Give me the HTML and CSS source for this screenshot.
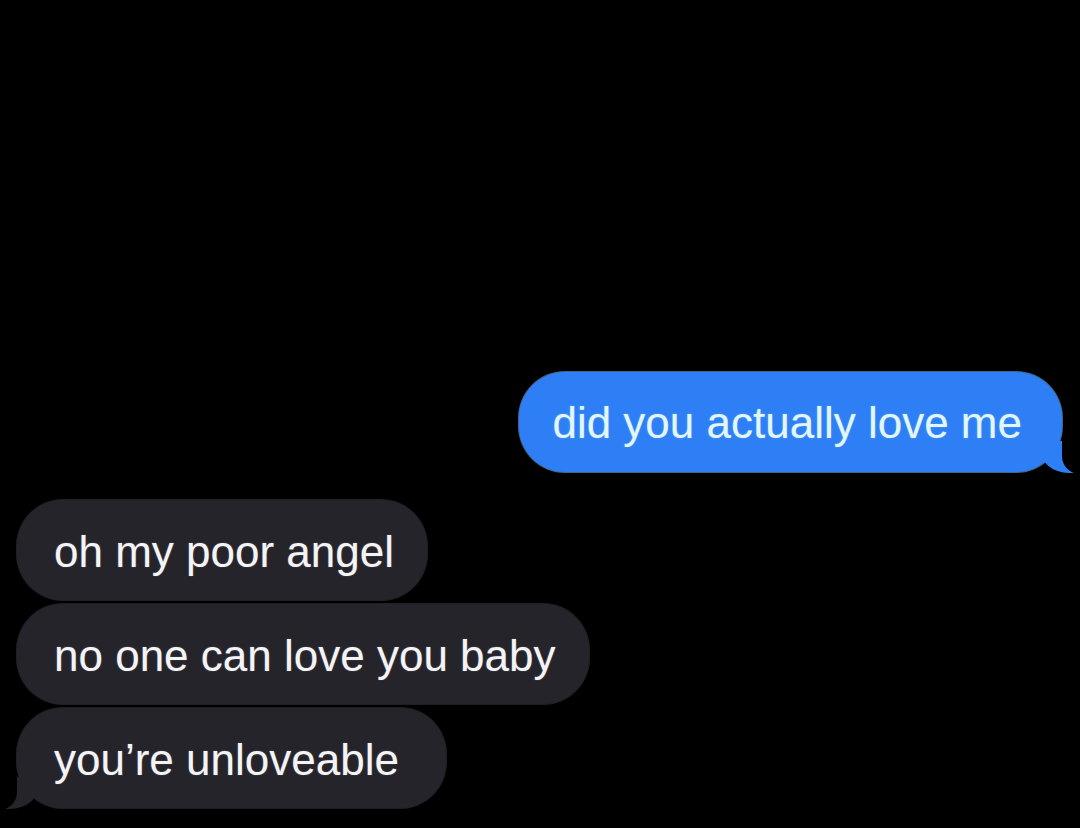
FILE: index.html
```html
<!DOCTYPE html>
<html lang="en">
<head>
<meta charset="utf-8">
<title>Messages</title>
<link rel="stylesheet" href="styles.css">
</head>
<body>
  <main class="thread">
    <div class="bubble sent tail-right">did you actually love me</div>
    <div class="group">
      <div class="bubble received">oh my poor angel</div>
      <div class="bubble received">no one can love you baby</div>
      <div class="bubble received tail-left wide-pad">you’re unloveable</div>
    </div>
  </main>
</body>
</html>
```

FILE: styles.css
```css
html, body {
  margin: 0;
  padding: 0;
  background: #000;
}

body {
  width: 1080px;
  height: 828px;
  overflow: hidden;
  font-family: "Liberation Sans", Arial, sans-serif;
}

.thread {
  box-sizing: border-box;
  height: 828px;
  display: flex;
  flex-direction: column;
  justify-content: flex-end;
  padding: 0 18px 20px 17px;
}

.group {
  display: flex;
  flex-direction: column;
  align-items: flex-start;
  gap: 4px;
}

.bubble {
  position: relative;
  box-sizing: border-box;
  height: 100px;
  padding: 26px 33px 22px 37px;
  font-size: 44px;
  line-height: 52px;
  border-radius: 46px;
  white-space: nowrap;
}

.sent {
  align-self: flex-end;
  margin-bottom: 28px;
  padding: 25px 40px 23px 33px;
  background: #2e7ff5;
  color: #e2f6ff;
  box-shadow: 0 0 0 1px rgba(120, 185, 255, 0.55);
  text-shadow: 0 0 2px rgba(170, 230, 255, 0.35);
}

.received {
  background: #25242b;
  color: #f4f4f6;
  box-shadow: 0 0 0 1px rgba(70, 68, 85, 0.45);
  text-shadow: 0 0 2px rgba(255, 255, 255, 0.2);
}

.wide-pad {
  padding-right: 47px;
}

/* iMessage-style tails */
.tail-right::before {
  content: "";
  position: absolute;
  bottom: -1px;
  right: -15px;
  width: 38px;
  height: 32px;
  background: #2e7ff5;
  border-bottom-left-radius: 30px 26px;
}

.tail-right::after {
  content: "";
  position: absolute;
  bottom: -2px;
  right: -40px;
  width: 40px;
  height: 34px;
  background: #000;
  border-bottom-left-radius: 18px;
}

.tail-left::before {
  content: "";
  position: absolute;
  bottom: -1px;
  left: -15px;
  width: 38px;
  height: 32px;
  background: #25242b;
  border-bottom-right-radius: 30px 26px;
}

.tail-left::after {
  content: "";
  position: absolute;
  bottom: -2px;
  left: -40px;
  width: 40px;
  height: 34px;
  background: #000;
  border-bottom-right-radius: 18px;
}
```
